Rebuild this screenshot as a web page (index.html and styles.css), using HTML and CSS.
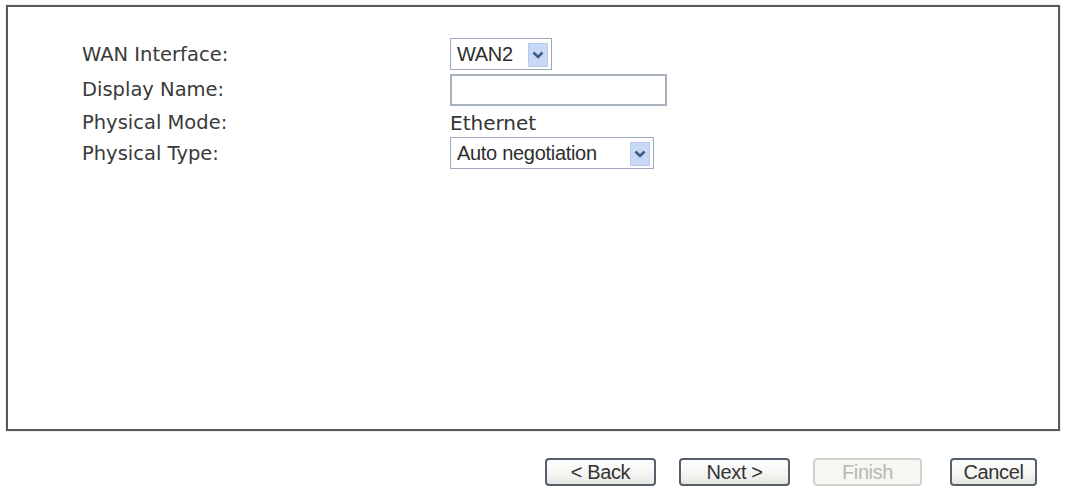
FILE: index.html
```html
<!DOCTYPE html>
<html>
<head>
<meta charset="utf-8">
<link rel="stylesheet" href="styles.css">
</head>
<body>
<div class="page">
  <div class="panel">
    <div class="form">
      <div class="label">WAN Interface:</div>
      <div class="field">
        <div class="combo combo-wan">
          <span class="combo-text">WAN2</span>
          <span class="combo-btn"><svg width="12" height="8" viewBox="0 0 12 8"><path d="M1.5 1.5 L6 6 L10.5 1.5" fill="none" stroke="#3f5a8c" stroke-width="2.6"/></svg></span>
        </div>
      </div>
      <div class="label">Display Name:</div>
      <div class="field"><div class="textbox"></div></div>
      <div class="label">Physical Mode:</div>
      <div class="field"><span class="value">Ethernet</span></div>
      <div class="label">Physical Type:</div>
      <div class="field">
        <div class="combo combo-type">
          <span class="combo-text">Auto negotiation</span>
          <span class="combo-btn"><svg width="12" height="8" viewBox="0 0 12 8"><path d="M1.5 1.5 L6 6 L10.5 1.5" fill="none" stroke="#3f5a8c" stroke-width="2.6"/></svg></span>
        </div>
      </div>
    </div>
  </div>
  <div class="buttons">
    <div class="btn btn-back">&lt; Back</div>
    <div class="btn btn-next">Next &gt;</div>
    <div class="btn btn-finish disabled">Finish</div>
    <div class="btn btn-cancel">Cancel</div>
  </div>
</div>
</body>
</html>
```
FILE: styles.css
```css
html, body {
  margin: 0;
  padding: 0;
  background: #ffffff;
}
.page {
  width: 1068px;
  height: 487px;
  padding: 5px 0 0 6px;
  box-sizing: border-box;
}
.panel {
  width: 1054px;
  height: 426px;
  box-sizing: border-box;
  border: 2px solid #5a5a5a;
  box-shadow: 0 0 1px #9a9a9a;
  background: #fff;
  padding: 31px 0 0 74px;
}
.form {
  display: grid;
  grid-template-columns: 368px auto;
  grid-template-rows: 32px 37px 30px 32px;
  align-items: center;
}
.label {
  font-family: "DejaVu Sans", Verdana, sans-serif;
  font-size: 19.5px;
  color: #3a3a3a;
  line-height: 24px;
  padding-top: 2px;
}
.field {
  display: flex;
  align-items: center;
  height: 100%;
}
.value {
  font-family: "DejaVu Sans", Verdana, sans-serif;
  font-size: 20px;
  color: #333;
  line-height: 24px;
  padding-top: 1px;
}
.combo {
  height: 32px;
  box-sizing: border-box;
  border: 1px solid #9eaabb;
  background: #fff;
  display: flex;
  align-items: center;
  justify-content: space-between;
  padding: 0 3px 0 6px;
}
.combo-wan { width: 102px; }
.combo-type { width: 204px; }
.combo-text {
  font-family: "Liberation Sans", Arial, sans-serif;
  font-size: 20px;
  color: #2e2e2e;
  letter-spacing: -0.3px;
}
.combo-btn {
  width: 20px;
  height: 24px;
  margin-top: 2px;
  background: #c9d8f4;
  border: 1px solid #b7c9ec;
  box-sizing: border-box;
  display: flex;
  align-items: center;
  justify-content: center;
}
.textbox {
  width: 217px;
  height: 32px;
  box-sizing: border-box;
  border: 2px solid #a9b2bc;
  background: #fff;
  margin-top: 3px;
}
.buttons {
  display: flex;
  justify-content: flex-end;
  gap: 23px;
  margin-top: 27px;
  padding-right: 31px;
}
.btn {
  height: 28px;
  box-sizing: border-box;
  border: 2px solid #56606c;
  border-radius: 4px;
  background: linear-gradient(#ffffff, #f1f1ee 70%, #e4e4df);
  font-family: "Liberation Sans", Arial, sans-serif;
  font-size: 20px;
  color: #333;
  display: flex;
  align-items: center;
  justify-content: center;
  letter-spacing: -0.4px;
}
.btn-back { width: 111px; }
.btn-next { width: 111px; }
.btn-finish { width: 109px; }
.btn-cancel { width: 87px; margin-left: 5px; }
.btn.disabled {
  border-color: #cfd2cc;
  color: #b8b8b0;
  background: #f6f6f2;
}
```
